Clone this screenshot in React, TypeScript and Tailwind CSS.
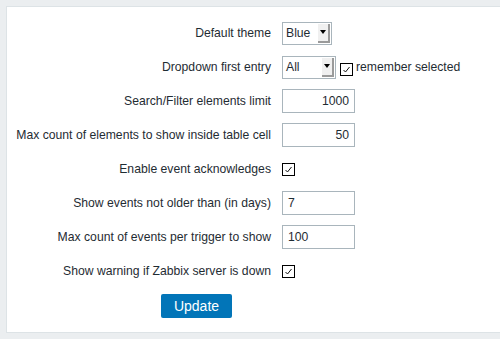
import React from "react";

// 체크박스 (작은 체크 표시)
function Check() {
    return (
        <span className="inline-flex w-[13px] h-[13px] border border-black bg-white items-center justify-center">
            <svg width="9" height="9" viewBox="0 0 9 9">
                <path d="M1.5 5 L3.5 7 L7.5 2" fill="none" stroke="#111" strokeWidth="1"/>
            </svg>
        </span>
    );
}

function Select({value, width}: { value: string; width: string }) {
    return (
        <div className={`${width} h-[23px] border border-[#a9b5bc] bg-white flex items-center pl-[3px] pr-[1px]`}>
            <span className="flex-1 text-[#1f2c33]">{value}</span>
            <span className="w-[12px] h-[19px] bg-[#f0f0f0] border-r-2 border-b-2 border-[#9a9a9a] flex items-center justify-center">
                <span className="w-0 h-0 border-l-[3px] border-r-[3px] border-t-[4px] border-l-transparent border-r-transparent border-t-black"/>
            </span>
        </div>
    );
}

function TextBox({value, right}: { value: string; right?: boolean }) {
    return (
        <div className={`w-[73px] h-[24px] border border-[#a9b5bc] bg-white flex items-center px-[5px] ${right ? "justify-end" : ""}`}>
            <span className="text-[#1f2c33]">{value}</span>
        </div>
    );
}

interface Row {
    label: string;
    field: React.ReactNode;
}

export default function App() {
    const rows: Row[] = [
        {label: "Default theme", field: <Select value="Blue" width="w-[50px]"/>},
        {
            label: "Dropdown first entry",
            field: (
                <div className="flex items-center">
                    <Select value="All" width="w-[54px]"/>
                    <span className="ml-[4px] mt-[5px] flex"><Check/></span>
                    <span className="ml-[3px] text-[#1f2c33]">remember selected</span>
                </div>
            ),
        },
        {label: "Search/Filter elements limit", field: <TextBox value="1000" right/>},
        {label: "Max count of elements to show inside table cell", field: <TextBox value="50" right/>},
        {label: "Enable event acknowledges", field: <Check/>},
        {label: "Show events not older than (in days)", field: <TextBox value="7"/>},
        {label: "Max count of events per trigger to show", field: <TextBox value="100"/>},
        {label: "Show warning if Zabbix server is down", field: <Check/>},
    ];

    return (
        <div className="w-[500px] h-[339px] bg-[#ebeef0] pt-[6px] pl-[6px] font-['Liberation_Sans',Arial,sans-serif] text-[12.2px] overflow-hidden">
            <div className="bg-white border-t border-l border-b border-[#dde3e6] h-[327px] pt-[9px]">
                {rows.map((row, i) => (
                    <div key={i} className="h-[34px] flex items-center">
                        <div className="w-[264px] text-right text-[#1f2c33] shrink-0">{row.label}</div>
                        <div className="ml-[11px] flex items-center">{row.field}</div>
                    </div>
                ))}
                <div className="pl-[154px] mt-[6px]">
                    <button className="w-[71px] h-[24px] bg-[#0275b8] text-white text-[14px] rounded-[2px]">
                        Update
                    </button>
                </div>
            </div>
        </div>
    );
}
